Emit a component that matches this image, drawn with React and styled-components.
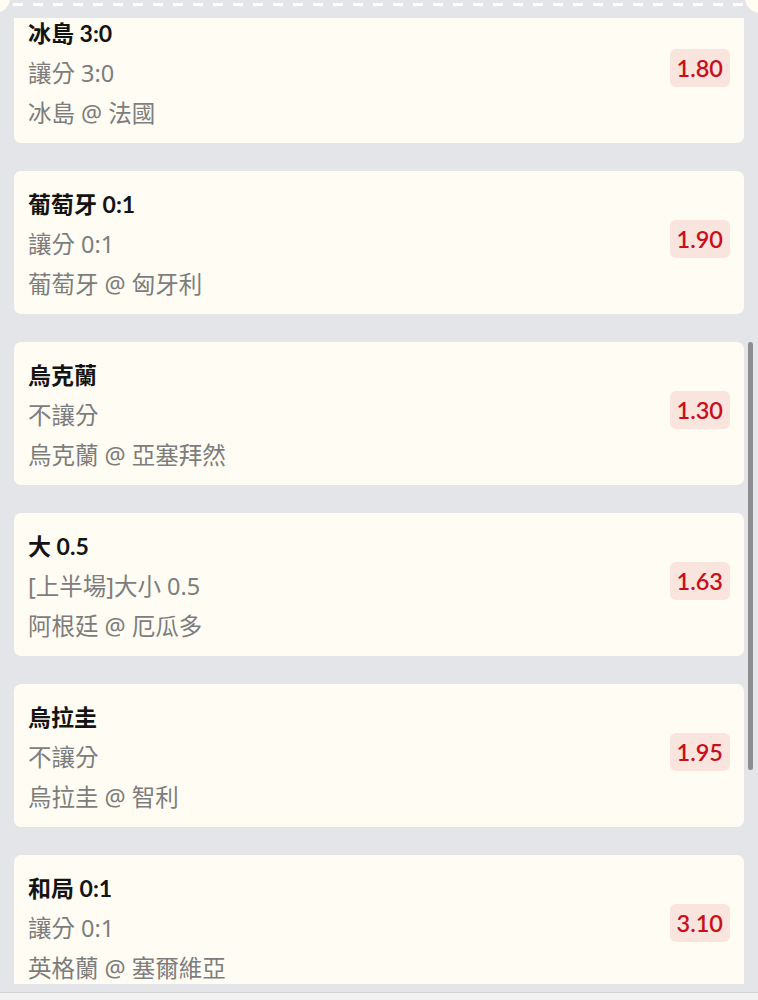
import React from "react"
import styled, { createGlobalStyle } from "styled-components"

const GlobalStyle = createGlobalStyle`
  html, body {
    margin: 0;
    padding: 0;
    background: #e4e5e8;
  }
  body {
    font-family: Lato, "Noto Sans CJK TC", sans-serif;
  }
`

const bets = [
  { title: "冰島 3:0", market: "讓分 3:0", match: "冰島 @ 法國", odds: "1.80" },
  { title: "葡萄牙 0:1", market: "讓分 0:1", match: "葡萄牙 @ 匈牙利", odds: "1.90" },
  { title: "烏克蘭", market: "不讓分", match: "烏克蘭 @ 亞塞拜然", odds: "1.30" },
  { title: "大 0.5", market: "[上半場]大小 0.5", match: "阿根廷 @ 厄瓜多", odds: "1.63" },
  { title: "烏拉圭", market: "不讓分", match: "烏拉圭 @ 智利", odds: "1.95" },
  { title: "和局 0:1", market: "讓分 0:1", match: "英格蘭 @ 塞爾維亞", odds: "3.10" },
]

const Page = styled.div`
  position: relative;
  display: flex;
  flex-direction: column;
  height: 1000px;
  width: 758px;
  overflow: hidden;
  background: #e4e5e8;
`

const TicketEdge = styled.div`
  position: relative;
  flex: 0 0 18px;
  background-image: repeating-linear-gradient(
    to right,
    #ffffff 0 10px,
    transparent 10px 20px
  );
  background-size: 100% 3px;
  background-position: 13px 3px;
  background-repeat: no-repeat;
  z-index: 2;
`

const Notch = styled.span`
  position: absolute;
  top: -17px;
  ${props => (props.side === "left" ? "left: -20px;" : "right: -17px;")}
  width: 30px;
  height: 30px;
  border-radius: 50%;
  background: #fffcf2;
`

const Scroller = styled.div`
  position: relative;
  flex: 1;
  overflow: hidden;
`

const List = styled.div`
  display: flex;
  flex-direction: column;
  gap: 28px;
  margin-top: -18px;
  padding: 0 14px;
`

const Card = styled.div`
  display: flex;
  align-items: center;
  justify-content: space-between;
  height: 143px;
  box-sizing: border-box;
  padding: 13px 14px 10px 14px;
  background: #fefcf3;
  border-radius: 7px;
`

const Info = styled.div`
  display: flex;
  flex-direction: column;
`

const Title = styled.div`
  font-family: Lato, "Noto Sans CJK TC", sans-serif;
  font-weight: 700;
  font-size: 23px;
  line-height: 40px;
  color: #141414;
`

const Detail = styled.div`
  font-family: "Noto Sans", "Noto Sans CJK TC", sans-serif;
  font-weight: 400;
  font-size: 23.5px;
  line-height: 40px;
  color: #7d7d7d;
`

const Odds = styled.div`
  margin-bottom: 10px;
  padding: 0 7px;
  height: 38px;
  display: flex;
  align-items: center;
  border-radius: 6px;
  background: #f9e4de;
  color: #c8101c;
  font-family: Lato, sans-serif;
  font-weight: 600;
  font-size: 23.5px;
`

const Thumb = styled.div`
  position: absolute;
  right: 5px;
  top: 324px;
  width: 5px;
  height: 428px;
  border-radius: 3px;
  background: #8d8d8f;
`

const Footer = styled.div`
  flex: 0 0 7px;
  margin-top: 8px;
  border-top: 1px solid #d3d4d6;
  background: #f2f2f3;
`

export default function App() {
  return (
    <>
      <GlobalStyle />
      <Page>
        <TicketEdge>
          <Notch side="left" />
          <Notch side="right" />
        </TicketEdge>
        <Scroller>
          <List>
            {bets.map(bet => (
              <Card key={bet.title + bet.match}>
                <Info>
                  <Title>{bet.title}</Title>
                  <Detail>{bet.market}</Detail>
                  <Detail>{bet.match}</Detail>
                </Info>
                <Odds>{bet.odds}</Odds>
              </Card>
            ))}
          </List>
          <Thumb />
        </Scroller>
        <Footer />
      </Page>
    </>
  )
}
